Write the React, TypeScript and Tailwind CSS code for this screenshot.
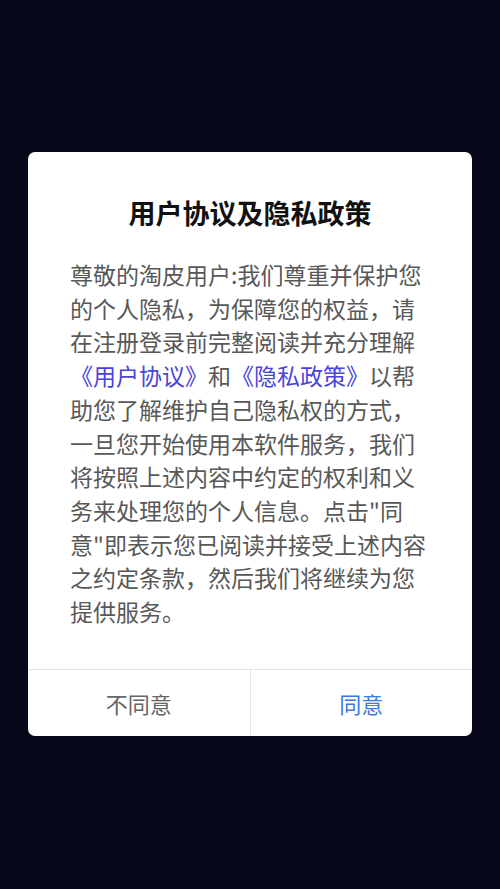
import React from 'react'

const font = { fontFamily: '"Noto Sans CJK SC", "Noto Sans", sans-serif' }

export default function App() {
  return (
    <div className="min-h-screen w-full bg-[#07071a] flex justify-center pt-[152px]" style={font}>
      <div className="w-[444px] h-[584px] bg-white rounded-[7px] overflow-hidden flex flex-col">
        <div className="pt-[42px] text-center text-[27px] leading-[38px] font-bold text-[#111]">
          用户协议及隐私政策
        </div>
        <div className="flex-1 px-[42px] mt-[26px] text-[23px] leading-[33.7px] text-[#585858] [text-spacing-trim:space-all]">
          尊敬的淘皮用户:我们尊重并保护您的个人隐私，为保障您的权益，请在注册登录前完整阅读并充分理解
          <span className="text-[#4a44d8]">《用户协议》</span>和
          <span className="text-[#4a44d8]">《隐私政策》</span>
          以帮助您了解维护自己隐私权的方式，一旦您开始使用本软件服务，我们将按照上述内容中约定的权利和义务来处理您的个人信息。点击"同意"即表示您已阅读并接受上述内容之约定条款，然后我们将继续为您提供服务。
        </div>
        <div className="h-[67px] border-t border-[#e2e2e2] flex">
          <button className="flex-1 flex items-center justify-center text-[22px] text-[#666] border-r border-[#e2e2e2]">
            不同意
          </button>
          <button className="flex-1 flex items-center justify-center text-[22px] text-[#3a7bd5]">
            同意
          </button>
        </div>
      </div>
    </div>
  )
}
